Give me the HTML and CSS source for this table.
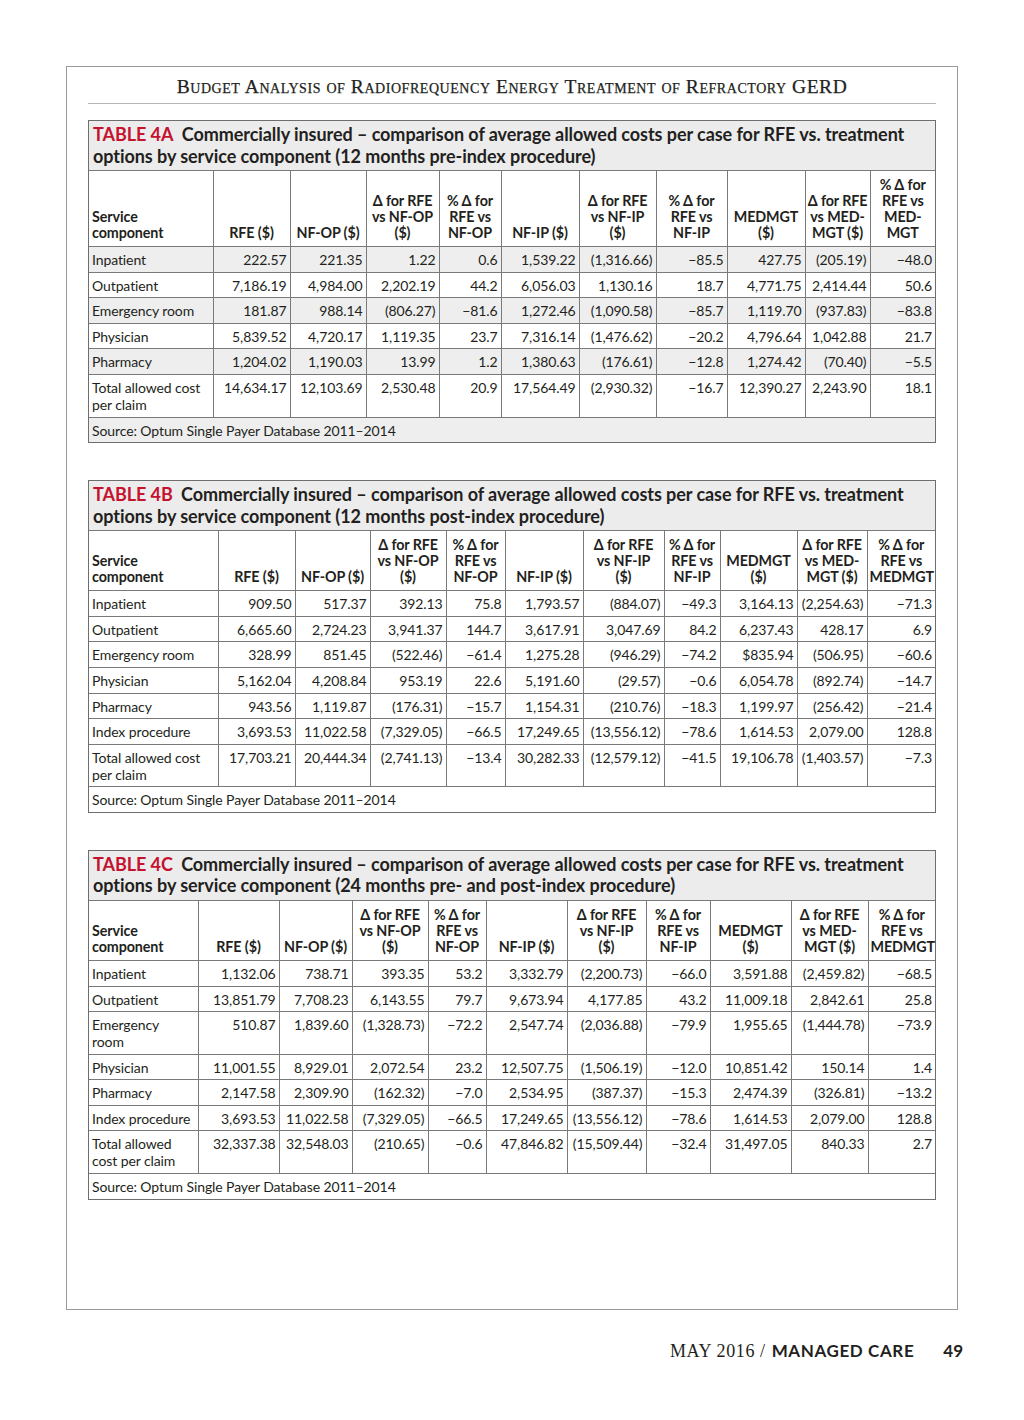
FILE: index.html
```html
<!DOCTYPE html>
<html lang="en">
<head>
<meta charset="utf-8">
<title>Budget Analysis of Radiofrequency Energy Treatment of Refractory GERD</title>
<link rel="stylesheet" href="styles.css">
</head>
<body>
<div class="page">
  <header class="running-head">Budget Analysis of Radiofrequency Energy Treatment of Refractory GERD</header>

  <section class="tbl tbl-4a">
    <h2 class="tbl-title"><span class="tbl-num">TABLE 4A</span> Commercially insured – comparison of average allowed costs per case for RFE vs. treatment<br>options by service component (12 months pre-index procedure)</h2>
    <table class="data">
      <colgroup><col><col><col><col><col><col><col><col><col><col><col></colgroup>
      <thead>
        <tr>
          <th class="first">Service<br>component</th>
          <th>RFE ($)</th>
          <th>NF-OP ($)</th>
          <th>Δ for RFE<br>vs NF-OP<br>($)</th>
          <th>% Δ for<br>RFE vs<br>NF-OP</th>
          <th>NF-IP ($)</th>
          <th>Δ for RFE<br>vs NF-IP<br>($)</th>
          <th>% Δ for<br>RFE vs<br>NF-IP</th>
          <th>MEDMGT<br>($)</th>
          <th>Δ for RFE<br>vs MED-<br>MGT ($)</th>
          <th>% Δ for<br>RFE vs<br>MED-<br>MGT</th>
        </tr>
      </thead>
      <tbody>
        <tr class="shade"><td>Inpatient</td><td>222.57</td><td>221.35</td><td>1.22</td><td>0.6</td><td>1,539.22</td><td>(1,316.66)</td><td>−85.5</td><td>427.75</td><td>(205.19)</td><td>−48.0</td></tr>
        <tr><td>Outpatient</td><td>7,186.19</td><td>4,984.00</td><td>2,202.19</td><td>44.2</td><td>6,056.03</td><td>1,130.16</td><td>18.7</td><td>4,771.75</td><td>2,414.44</td><td>50.6</td></tr>
        <tr class="shade"><td>Emergency room</td><td>181.87</td><td>988.14</td><td>(806.27)</td><td>−81.6</td><td>1,272.46</td><td>(1,090.58)</td><td>−85.7</td><td>1,119.70</td><td>(937.83)</td><td>−83.8</td></tr>
        <tr><td>Physician</td><td>5,839.52</td><td>4,720.17</td><td>1,119.35</td><td>23.7</td><td>7,316.14</td><td>(1,476.62)</td><td>−20.2</td><td>4,796.64</td><td>1,042.88</td><td>21.7</td></tr>
        <tr class="shade"><td>Pharmacy</td><td>1,204.02</td><td>1,190.03</td><td>13.99</td><td>1.2</td><td>1,380.63</td><td>(176.61)</td><td>−12.8</td><td>1,274.42</td><td>(70.40)</td><td>−5.5</td></tr>
        <tr><td>Total allowed cost<br>per claim</td><td>14,634.17</td><td>12,103.69</td><td>2,530.48</td><td>20.9</td><td>17,564.49</td><td>(2,930.32)</td><td>−16.7</td><td>12,390.27</td><td>2,243.90</td><td>18.1</td></tr>
      </tbody>
      <tfoot>
        <tr class="shade"><td class="source" colspan="11">Source: Optum Single Payer Database 2011–2014</td></tr>
      </tfoot>
    </table>
  </section>

  <section class="tbl tbl-4b">
    <h2 class="tbl-title"><span class="tbl-num">TABLE 4B</span> Commercially insured – comparison of average allowed costs per case for RFE vs. treatment<br>options by service component (12 months post-index procedure)</h2>
    <table class="data">
      <colgroup><col><col><col><col><col><col><col><col><col><col><col></colgroup>
      <thead>
        <tr>
          <th class="first">Service<br>component</th>
          <th>RFE ($)</th>
          <th>NF-OP ($)</th>
          <th>Δ for RFE<br>vs NF-OP<br>($)</th>
          <th>% Δ for<br>RFE vs<br>NF-OP</th>
          <th>NF-IP ($)</th>
          <th>Δ for RFE<br>vs NF-IP<br>($)</th>
          <th>% Δ for<br>RFE vs<br>NF-IP</th>
          <th>MEDMGT<br>($)</th>
          <th>Δ for RFE<br>vs MED-<br>MGT ($)</th>
          <th>% Δ for<br>RFE vs<br>MEDMGT</th>
        </tr>
      </thead>
      <tbody>
        <tr><td>Inpatient</td><td>909.50</td><td>517.37</td><td>392.13</td><td>75.8</td><td>1,793.57</td><td>(884.07)</td><td>−49.3</td><td>3,164.13</td><td>(2,254.63)</td><td>−71.3</td></tr>
        <tr><td>Outpatient</td><td>6,665.60</td><td>2,724.23</td><td>3,941.37</td><td>144.7</td><td>3,617.91</td><td>3,047.69</td><td>84.2</td><td>6,237.43</td><td>428.17</td><td>6.9</td></tr>
        <tr><td>Emergency room</td><td>328.99</td><td>851.45</td><td>(522.46)</td><td>−61.4</td><td>1,275.28</td><td>(946.29)</td><td>−74.2</td><td>$835.94</td><td>(506.95)</td><td>−60.6</td></tr>
        <tr><td>Physician</td><td>5,162.04</td><td>4,208.84</td><td>953.19</td><td>22.6</td><td>5,191.60</td><td>(29.57)</td><td>−0.6</td><td>6,054.78</td><td>(892.74)</td><td>−14.7</td></tr>
        <tr><td>Pharmacy</td><td>943.56</td><td>1,119.87</td><td>(176.31)</td><td>−15.7</td><td>1,154.31</td><td>(210.76)</td><td>−18.3</td><td>1,199.97</td><td>(256.42)</td><td>−21.4</td></tr>
        <tr><td>Index procedure</td><td>3,693.53</td><td>11,022.58</td><td>(7,329.05)</td><td>−66.5</td><td>17,249.65</td><td>(13,556.12)</td><td>−78.6</td><td>1,614.53</td><td>2,079.00</td><td>128.8</td></tr>
        <tr><td>Total allowed cost<br>per claim</td><td>17,703.21</td><td>20,444.34</td><td>(2,741.13)</td><td>−13.4</td><td>30,282.33</td><td>(12,579.12)</td><td>−41.5</td><td>19,106.78</td><td>(1,403.57)</td><td>−7.3</td></tr>
      </tbody>
      <tfoot>
        <tr><td class="source" colspan="11">Source: Optum Single Payer Database 2011–2014</td></tr>
      </tfoot>
    </table>
  </section>

  <section class="tbl tbl-4c">
    <h2 class="tbl-title"><span class="tbl-num">TABLE 4C</span> Commercially insured – comparison of average allowed costs per case for RFE vs. treatment<br>options by service component (24 months pre- and post-index procedure)</h2>
    <table class="data">
      <colgroup><col><col><col><col><col><col><col><col><col><col><col></colgroup>
      <thead>
        <tr>
          <th class="first">Service<br>component</th>
          <th>RFE ($)</th>
          <th>NF-OP ($)</th>
          <th>Δ for RFE<br>vs NF-OP<br>($)</th>
          <th>% Δ for<br>RFE vs<br>NF-OP</th>
          <th>NF-IP ($)</th>
          <th>Δ for RFE<br>vs NF-IP<br>($)</th>
          <th>% Δ for<br>RFE vs<br>NF-IP</th>
          <th>MEDMGT<br>($)</th>
          <th>Δ for RFE<br>vs MED-<br>MGT ($)</th>
          <th>% Δ for<br>RFE vs<br>MEDMGT</th>
        </tr>
      </thead>
      <tbody>
        <tr><td>Inpatient</td><td>1,132.06</td><td>738.71</td><td>393.35</td><td>53.2</td><td>3,332.79</td><td>(2,200.73)</td><td>−66.0</td><td>3,591.88</td><td>(2,459.82)</td><td>−68.5</td></tr>
        <tr><td>Outpatient</td><td>13,851.79</td><td>7,708.23</td><td>6,143.55</td><td>79.7</td><td>9,673.94</td><td>4,177.85</td><td>43.2</td><td>11,009.18</td><td>2,842.61</td><td>25.8</td></tr>
        <tr><td>Emergency<br>room</td><td>510.87</td><td>1,839.60</td><td>(1,328.73)</td><td>−72.2</td><td>2,547.74</td><td>(2,036.88)</td><td>−79.9</td><td>1,955.65</td><td>(1,444.78)</td><td>−73.9</td></tr>
        <tr><td>Physician</td><td>11,001.55</td><td>8,929.01</td><td>2,072.54</td><td>23.2</td><td>12,507.75</td><td>(1,506.19)</td><td>−12.0</td><td>10,851.42</td><td>150.14</td><td>1.4</td></tr>
        <tr><td>Pharmacy</td><td>2,147.58</td><td>2,309.90</td><td>(162.32)</td><td>−7.0</td><td>2,534.95</td><td>(387.37)</td><td>−15.3</td><td>2,474.39</td><td>(326.81)</td><td>−13.2</td></tr>
        <tr><td>Index procedure</td><td>3,693.53</td><td>11,022.58</td><td>(7,329.05)</td><td>−66.5</td><td>17,249.65</td><td>(13,556.12)</td><td>−78.6</td><td>1,614.53</td><td>2,079.00</td><td>128.8</td></tr>
        <tr><td>Total allowed<br>cost per claim</td><td>32,337.38</td><td>32,548.03</td><td>(210.65)</td><td>−0.6</td><td>47,846.82</td><td>(15,509.44)</td><td>−32.4</td><td>31,497.05</td><td>840.33</td><td>2.7</td></tr>
      </tbody>
      <tfoot>
        <tr><td class="source" colspan="11">Source: Optum Single Payer Database 2011–2014</td></tr>
      </tfoot>
    </table>
  </section>
</div>

<footer class="folio">
  <span class="folio-date">MAY 2016 /</span>
  <span class="folio-mag">MANAGED CARE</span>
  <span class="folio-page">49</span>
</footer>
</body>
</html>
```

FILE: styles.css
```css
html, body {
  margin: 0;
  padding: 0;
  background: #ffffff;
}

body {
  color: #231f20;
  font-family: "Lato", "Open Sans", sans-serif;
}

.page {
  box-sizing: border-box;
  width: 892px;
  height: 1244px;
  margin: 66px 0 0 66px;
  padding: 0 21px;
  border: 1px solid #9a9a9a;
}

.running-head {
  padding: 9px 0 5px;
  border-bottom: 1px solid #b5b5b5;
  text-align: center;
  font-family: "Liberation Serif", "DejaVu Serif", serif;
  font-size: 19.5px;
  line-height: 22px;
  font-variant: small-caps;
  letter-spacing: 0.55px;
  color: #231f20;
  -webkit-text-stroke: 0.25px #231f20;
}

.tbl {
  border: 1px solid #6e6e6e;
  margin-top: 37px;
}

.tbl-4a {
  margin-top: 16px;
}

.tbl-title {
  margin: 0;
  padding: 3px 4px 3px;
  background: #ececec;
  border-bottom: 1px solid #7a7a7a;
  font-size: 18px;
  line-height: 21.5px;
  font-weight: 700;
  letter-spacing: -0.06px;
  color: #231f20;
}

.tbl-num {
  color: #c4122f;
  margin-right: 4px;
}

.data {
  width: 846px;
  border-collapse: collapse;
  border-style: hidden;
  table-layout: fixed;
  font-size: 14px;
}

.data th,
.data td {
  border: 1px solid #7a7a7a;
}

.data th {
  padding: 6px 2px 5px;
  font-weight: 700;
  font-size: 14.3px;
  line-height: 16px;
  text-align: center;
  vertical-align: bottom;
  letter-spacing: -0.1px;
}

.data th.first {
  text-align: left;
  padding-left: 3px;
}

.data td {
  padding: 4px 3px 3.6px;
  line-height: 17px;
  text-align: right;
  vertical-align: top;
  white-space: nowrap;
  letter-spacing: -0.1px;
}

.data td:first-child {
  text-align: left;
}

.data td.source {
  text-align: left;
}

.shade td {
  background: #eeeeee;
}

/* column widths: table 4A */
.tbl-4a col:nth-child(1) { width: 124px; }
.tbl-4a col:nth-child(2) { width: 77px; }
.tbl-4a col:nth-child(3) { width: 76px; }
.tbl-4a col:nth-child(4) { width: 73px; }
.tbl-4a col:nth-child(5) { width: 62px; }
.tbl-4a col:nth-child(6) { width: 78px; }
.tbl-4a col:nth-child(7) { width: 77px; }
.tbl-4a col:nth-child(8) { width: 71px; }
.tbl-4a col:nth-child(9) { width: 78px; }
.tbl-4a col:nth-child(10) { width: 65px; }
.tbl-4a col:nth-child(11) { width: 65px; }

/* column widths: table 4B */
.tbl-4b col:nth-child(1) { width: 129px; }
.tbl-4b col:nth-child(2) { width: 77px; }
.tbl-4b col:nth-child(3) { width: 75px; }
.tbl-4b col:nth-child(4) { width: 76px; }
.tbl-4b col:nth-child(5) { width: 59px; }
.tbl-4b col:nth-child(6) { width: 78px; }
.tbl-4b col:nth-child(7) { width: 81px; }
.tbl-4b col:nth-child(8) { width: 56px; }
.tbl-4b col:nth-child(9) { width: 77px; }
.tbl-4b col:nth-child(10) { width: 70px; }
.tbl-4b col:nth-child(11) { width: 68px; }

/* column widths: table 4C */
.tbl-4c col:nth-child(1) { width: 109px; }
.tbl-4c col:nth-child(2) { width: 81px; }
.tbl-4c col:nth-child(3) { width: 73px; }
.tbl-4c col:nth-child(4) { width: 76px; }
.tbl-4c col:nth-child(5) { width: 58px; }
.tbl-4c col:nth-child(6) { width: 81px; }
.tbl-4c col:nth-child(7) { width: 79px; }
.tbl-4c col:nth-child(8) { width: 64px; }
.tbl-4c col:nth-child(9) { width: 81px; }
.tbl-4c col:nth-child(10) { width: 77px; }
.tbl-4c col:nth-child(11) { width: 67px; }

.folio {
  display: flex;
  justify-content: flex-end;
  align-items: baseline;
  width: 963px;
  margin-top: 30px;
  color: #231f20;
}

.folio-date {
  font-family: "Liberation Serif", "DejaVu Serif", serif;
  font-size: 18px;
  letter-spacing: 0.6px;
  margin-right: 6px;
}

.folio-mag {
  font-family: "Lato", sans-serif;
  font-weight: 700;
  font-size: 17px;
  letter-spacing: 0.6px;
}

.folio-page {
  font-family: "Lato", sans-serif;
  font-weight: 700;
  font-size: 17px;
  margin-left: 29px;
}
```
